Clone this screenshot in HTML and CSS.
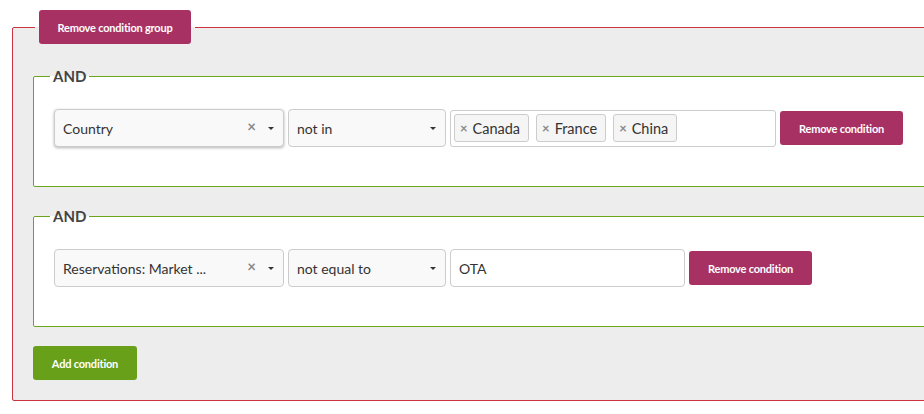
FILE: index.html
```html
<!DOCTYPE html>
<html lang="en">
<head>
    <meta charset="UTF-8">
    <meta name="viewport" content="width=device-width, initial-scale=1.0">
    <title>Condition Groups</title>
    <link rel="stylesheet" href="styles.css">
</head>
<body>
    <fieldset class="group">
        <legend class="group-legend"><button class="btn btn-remove btn-group">Remove condition group</button></legend>

        <fieldset class="condition">
            <legend class="condition-legend">AND</legend>
            <div class="row">
                <div class="select select-field focused">
                    <span class="select-value">Country</span>
                    <span class="select-clear">&times;</span>
                    <span class="select-caret"></span>
                </div>
                <div class="select select-op">
                    <span class="select-value">not in</span>
                    <span class="select-caret"></span>
                </div>
                <div class="tags">
                    <span class="tag"><span class="tag-x">&times;</span>Canada</span>
                    <span class="tag"><span class="tag-x">&times;</span>France</span>
                    <span class="tag"><span class="tag-x">&times;</span>China</span>
                </div>
                <button class="btn btn-remove">Remove condition</button>
            </div>
        </fieldset>

        <fieldset class="condition">
            <legend class="condition-legend">AND</legend>
            <div class="row">
                <div class="select select-field">
                    <span class="select-value">Reservations: Market ...</span>
                    <span class="select-clear">&times;</span>
                    <span class="select-caret"></span>
                </div>
                <div class="select select-op">
                    <span class="select-value">not equal to</span>
                    <span class="select-caret"></span>
                </div>
                <input type="text" class="text-input" value="OTA">
                <button class="btn btn-remove">Remove condition</button>
            </div>
        </fieldset>

        <button class="btn btn-add">Add condition</button>
    </fieldset>
</body>
</html>
```

FILE: styles.css
```css
html, body {
    margin: 0;
    padding: 0;
    overflow: hidden;
    background: #ffffff;
    font-family: Lato, "Liberation Sans", sans-serif;
    color: #333333;
}
body {
    padding: 10px 0 0 12px;
}

/* outer group */
.group {
    width: 1000px;
    margin: 0;
    padding: 22px 20px 20px 20px;
    border: 1px solid #cc3341;
    border-radius: 2px;
    background-color: #ededed;
}
.group-legend {
    padding: 0 4px;
    margin-left: 2px;
}

/* condition boxes */
.condition {
    margin: 0 0 19px 0;
    padding: 23px 20px 39px 20px;
    border: 1px solid #6aa51d;
    border-radius: 2px;
    background-color: #ffffff;
}
.condition-legend {
    padding: 0 3px;
    margin-left: -4px;
    font-size: 15px;
    font-weight: bold;
    line-height: 20px;
    color: #444444;
}

.row {
    display: flex;
    align-items: center;
    gap: 4px;
}

/* buttons */
.btn {
    border: none;
    border-radius: 3px;
    color: #ffffff;
    font-family: inherit;
    font-size: 11px;
    font-weight: bold;
    letter-spacing: -0.2px;
    height: 34px;
    cursor: pointer;
}
.btn-remove {
    background-color: #a83163;
    width: 123px;
}
.btn-group {
    display: block;
    width: 152px;
}
.btn-add {
    display: block;
    background-color: #68a01a;
    width: 104px;
}

/* selects */
.select {
    box-sizing: border-box;
    display: flex;
    align-items: center;
    height: 38px;
    padding: 0 8px;
    border: 1px solid #cccccc;
    border-radius: 4px;
    background-color: #f9f9f9;
    font-size: 14px;
}
.select-field {
    width: 230px;
}
.select-op {
    width: 158px;
}
.focused {
    box-shadow: 0 1px 3px rgba(0, 0, 0, 0.3);
}
.select-value {
    flex: 1;
    white-space: nowrap;
}
.select-clear {
    color: #888888;
    font-size: 15px;
    font-weight: bold;
    margin-right: 12px;
    margin-top: -4px;
}
.select-caret {
    width: 0;
    height: 0;
    border-left: 3px solid transparent;
    border-right: 3px solid transparent;
    border-top: 3px solid #333333;
    margin-right: 1px;
}

/* tag input */
.tags {
    box-sizing: border-box;
    display: flex;
    align-items: center;
    gap: 7px;
    width: 326px;
    height: 37px;
    padding: 0 3px;
    border: 1px solid #cccccc;
    border-radius: 3px;
    background-color: #ffffff;
}
.tag {
    box-sizing: border-box;
    display: inline-flex;
    align-items: center;
    height: 28px;
    padding: 0 8px 0 5px;
    border: 1px solid #cccccc;
    border-radius: 3px;
    background-color: #f5f5f5;
    font-size: 14.5px;
}
.tag-x {
    color: #888888;
    font-weight: bold;
    font-size: 13px;
    margin-right: 5px;
}

.text-input {
    box-sizing: border-box;
    width: 235px;
    height: 38px;
    padding: 0 8px;
    border: 1px solid #cccccc;
    border-radius: 4px;
    font-family: inherit;
    font-size: 14px;
    color: #333333;
}
```
